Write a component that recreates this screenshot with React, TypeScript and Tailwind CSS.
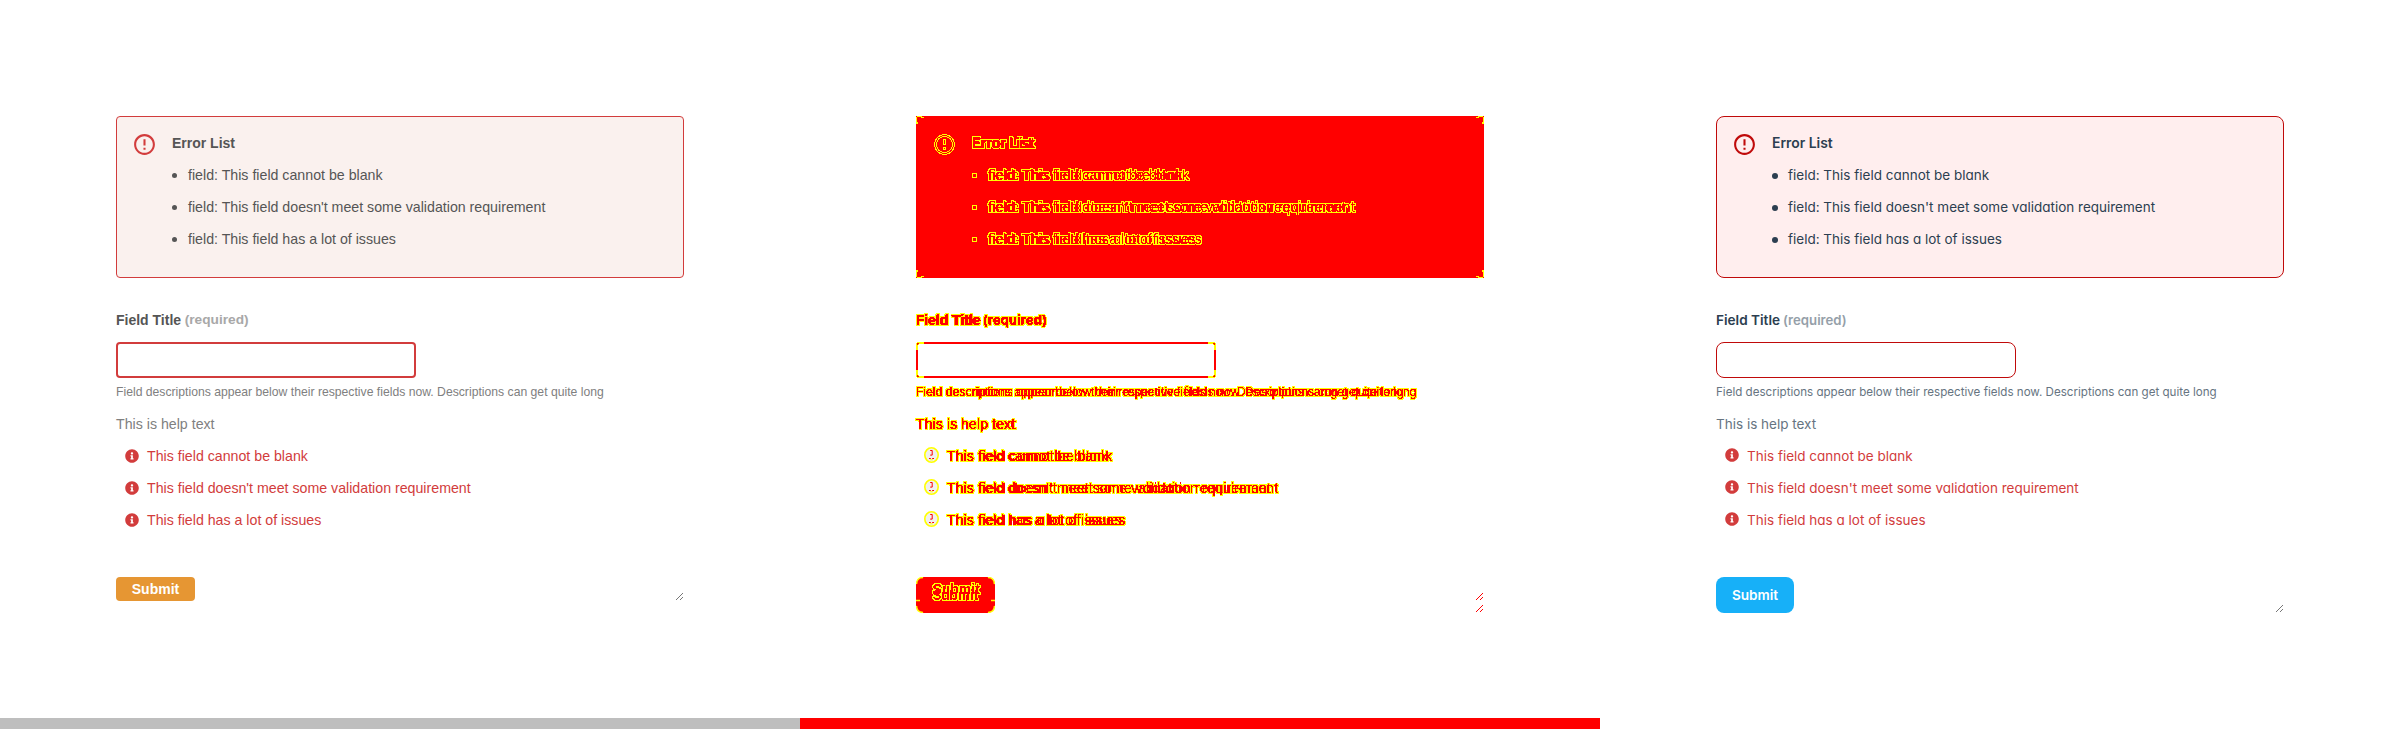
import type { CSSProperties } from "react";
import { clsx } from "clsx";
import { FaInfoCircle } from "react-icons/fa";
import { MdErrorOutline } from "react-icons/md";

type Theme = "before" | "diff" | "after";
type Kind = "title" | "label" | "required" | "body" | "small" | "button";

const classicText: Record<Kind, string> = {
  title: "font-['Liberation_Sans',sans-serif] text-[14px] font-bold",
  label: "font-['Liberation_Sans',sans-serif] text-[14px] font-bold",
  required: "font-['Liberation_Sans',sans-serif] text-[13.7px] font-bold",
  body: "font-['Liberation_Sans',sans-serif] text-[14.2px]",
  small: "font-['Liberation_Sans',sans-serif] text-[12.2px]",
  button: "font-['Liberation_Sans',sans-serif] text-[14px] font-bold",
};

const modernText: Record<Kind, string> = {
  title: "font-[Inter,sans-serif] [font-feature-settings:'cv11'] text-[13.9px] font-semibold",
  label: "font-[Inter,sans-serif] [font-feature-settings:'cv11'] text-[13.6px] font-semibold",
  required: "font-[Inter,sans-serif] [font-feature-settings:'cv11'] text-[13.2px] font-semibold",
  body: "font-[Inter,sans-serif] [font-feature-settings:'cv11'] text-[13.5px]",
  small: "font-[Inter,sans-serif] [font-feature-settings:'cv11'] text-[11.6px]",
  button: "font-[Inter,sans-serif] [font-feature-settings:'cv11'] text-[13.6px] font-semibold",
};

const overlayText: Record<Kind, string> = {
  title: "before:top-0 before:font-['Liberation_Sans',sans-serif] before:text-[14px] before:font-bold",
  label: "before:top-0 before:font-['Liberation_Sans',sans-serif] before:text-[14px] before:font-bold",
  required: "before:top-0 before:font-['Liberation_Sans',sans-serif] before:text-[13.7px] before:font-bold",
  body: "before:top-0 before:font-['Liberation_Sans',sans-serif] before:text-[14.2px]",
  small: "before:top-0 before:font-['Liberation_Sans',sans-serif] before:text-[12.2px]",
  button: "before:-top-[6px] before:font-['Liberation_Sans',sans-serif] before:text-[14px] before:font-bold",
};

function Txt({ theme, kind, children }: { theme: Theme; kind: Kind; children: string }) {
  if (theme === "before") return <span className={clsx("block whitespace-nowrap", classicText[kind])}>{children}</span>;
  if (theme === "after") return <span className={clsx("block whitespace-nowrap", modernText[kind])}>{children}</span>;
  return (
    <span
      data-text={children}
      className={clsx(
        "relative block w-fit whitespace-nowrap text-[#ff0000] [filter:url(#edges)]",
        "before:absolute before:left-0 before:whitespace-nowrap before:content-[attr(data-text)]",
        modernText[kind],
        overlayText[kind],
      )}
    >
      {children}
    </span>
  );
}

/** Splits a shape into a red core and a hard yellow fringe. */
function EdgeFilter() {
  return (
    <svg className="absolute size-0" aria-hidden="true">
      <filter id="edges" x="-5%" y="-40%" width="110%" height="180%" colorInterpolationFilters="sRGB">
        <feComponentTransfer in="SourceAlpha" result="core">
          <feFuncA type="linear" slope="40" intercept="-16" />
        </feComponentTransfer>
        <feComponentTransfer in="SourceAlpha" result="strong">
          <feFuncA type="linear" slope="40" intercept="-22" />
        </feComponentTransfer>
        <feMorphology in="strong" operator="dilate" radius="1" result="wide" />
        <feFlood floodColor="#ffff00" />
        <feComposite in2="wide" operator="in" result="fringe" />
        <feFlood floodColor="#ff0000" />
        <feComposite in2="core" operator="in" result="center" />
        <feMerge>
          <feMergeNode in="fringe" />
          <feMergeNode in="center" />
        </feMerge>
      </filter>
    </svg>
  );
}

/** Yellow marks over the four corners of a box whose radius changed. */
function Corners({ inner }: { inner?: boolean }) {
  const edge = inner ? "0px" : "-1px";
  const spots = ["top-(--edge) left-(--edge)", "top-(--edge) right-(--edge) -scale-x-100", "bottom-(--edge) left-(--edge) -scale-y-100", "right-(--edge) bottom-(--edge) -scale-100"];
  return (
    <>
      {spots.map((spot) => (
        <svg
          key={spot}
          viewBox="0 0 8 8"
          className={clsx("absolute size-2", spot)}
          style={{ "--edge": edge } as CSSProperties}
          shapeRendering="crispEdges"
          fill="#ffff00"
        >
          <path d="M0 0h1v1H0z" fill={inner ? "#ffffff" : "#ff0000"} />
          <path d="M1 0h5v1H1zM5 1h3v1H5zM0 1h1v5H0zM0 6h2v2H0z" />
          {inner && <path d="M1 3h1v3H1zM3 1h2v1H3zM2 2h1v1H2zM6 0h2v1H6z" />}
        </svg>
      ))}
    </>
  );
}

function ResizeHandle({ color }: { color: string }) {
  return (
    <svg viewBox="0 0 7 7" className="size-[7px]" shapeRendering="crispEdges" fill={color}>
      <path d="M6 0h1v1H6zM5 1h1v1H5zM4 2h1v1H4zM3 3h1v1H3zM2 4h1v1H2zM1 5h1v1H1zM0 6h1v1H0zM6 4h1v1H6zM5 5h1v1H5zM4 6h1v1H4z" />
    </svg>
  );
}

function DiffInfo() {
  return (
    <svg viewBox="0 0 15 16" className="h-4 w-[15px]">
      <ellipse cx="7.5" cy="8" rx="6.7" ry="7.2" fill="#f0f0f0" stroke="#ffff00" strokeWidth="1.6" />
      <path d="M6.2 3.5h2v4.6h-2M5 11.5h1.8M8.2 11.5H10" fill="none" stroke="#ff0000" strokeWidth="1" />
      <path d="M6.2 12.8h2.6" stroke="#ffff00" strokeWidth="1" />
    </svg>
  );
}

/** Outlined alert mark drawn as its edges only. */
function DiffAlert() {
  return (
    <svg viewBox="0 0 25 25" className="mt-[5px] size-[25px] shrink-0" fill="none" stroke="#ffff00" strokeWidth="1" shapeRendering="crispEdges">
      <circle cx="12.5" cy="12.5" r="10" />
      <circle cx="12.5" cy="12.5" r="8" />
      <path d="M11.5 7.5h2v5h-2zM11.5 15.5h2v2h-2z" />
    </svg>
  );
}

const issues = [
  "This field cannot be blank",
  "This field doesn't meet some validation requirement",
  "This field has a lot of issues",
];

function Panel({ theme }: { theme: Theme }) {
  const before = theme === "before";
  const diff = theme === "diff";
  const after = theme === "after";
  return (
    <section className="flex h-[729px] w-[800px] flex-col bg-white">
      <div className="mx-[116px] mt-[116px] flex w-[568px] flex-col items-start">
        <div
          className={clsx(
            "relative flex h-[162px] w-full border pt-[10px] pl-[15px]",
            before && "rounded-[4px] border-[#d23c3c] bg-[#faf1ee] text-[#555555]",
            diff && "border-[#ff0000] bg-[#ff0000]",
            after && "rounded-[8px] border-[#c00a0a] bg-[#ffeeee] text-[#2c3e50]",
          )}
        >
          {diff && <Corners />}
          {diff ? (
            <DiffAlert />
          ) : (
            <MdErrorOutline className={clsx("mt-[5px] size-[25px] shrink-0", before ? "text-[#d23c3c]" : "text-[#c00a0a]")} />
          )}
          <div className="ml-[15px]">
            <div className="h-8 leading-8">
              <Txt theme={theme} kind="title">Error List</Txt>
            </div>
            <ul>
              {issues.map((issue) => (
                <li key={issue} className="flex h-8 items-center leading-8">
                  <span
                    className={clsx(
                      "mt-px shrink-0",
                      before && "mr-[11px] size-[5px] rounded-full bg-[#555555]",
                      diff && "mr-[11px] size-[5px] border border-[#ffff00]",
                      after && "mr-[10px] size-[6px] rounded-full bg-[#2c3e50]",
                    )}
                  />
                  <Txt theme={theme} kind="body">{"field: " + issue}</Txt>
                </li>
              ))}
            </ul>
          </div>
        </div>

        <div
          className={clsx(
            "mt-[26px] flex h-8 leading-8",
            before ? "gap-[3.6px] text-[#555555]" : "gap-[3px] text-[#2c3e50]",
          )}
        >
          <Txt theme={theme} kind="label">Field Title</Txt>
          <div className={before ? "text-[#a8a8a8]" : "text-[#959fa9]"}>
            <Txt theme={theme} kind="required">(required)</Txt>
          </div>
        </div>

        <div
          className={clsx(
            "relative mt-[6px] h-9 w-[300px]",
            before && "rounded-[4px] border-2 border-[#d23c3c]",
            after && "rounded-[8px] border border-[#c00a0a]",
          )}
        >
          {diff && (
            <>
              <div className="size-full border-2 border-[#ff0000]" />
              <Corners inner />
            </>
          )}
        </div>

        <div className={clsx("mt-[6px] h-4 leading-4", before ? "text-[#808080]" : "text-[#667481]")}>
          <Txt theme={theme} kind="small">
            Field descriptions appear below their respective fields now. Descriptions can get quite long
          </Txt>
        </div>
        <div className={clsx("mt-2 h-8 leading-8", before ? "text-[#808080]" : "text-[#667481]")}>
          <Txt theme={theme} kind="body">This is help text</Txt>
        </div>

        <ul className="text-[#d23c3c]">
          {issues.map((issue) => (
            <li key={issue} className="flex h-8 leading-8">
              <span className="w-[31px] shrink-0 pl-2">
                {diff ? (
                  <span className="block pt-[7px]"><DiffInfo /></span>
                ) : (
                  <FaInfoCircle className={clsx("ml-[0.5px] size-[14px]", before ? "mt-[8.5px]" : "mt-[7.5px]")} />
                )}
              </span>
              <Txt theme={theme} kind="body">{issue}</Txt>
            </li>
          ))}
        </ul>

        <div className="mt-[41px] flex w-full items-end justify-between">
          <button
            className={clsx(
              "relative flex justify-center text-white",
              before && "h-6 w-[79px] rounded-[4px] bg-[#e69633] leading-6",
              diff && "h-9 w-[79px] rounded-[8px] bg-[#ff0000] leading-9",
              after && "h-9 w-[78px] rounded-[8px] bg-[#17b0f8] leading-9",
            )}
          >
            {diff && (
              <svg viewBox="0 0 79 36" className="absolute inset-0 h-9 w-[79px]" fill="none" stroke="#ffff00" strokeWidth="1.4">
                <path d="M.6 7Q.6.6 7 .6M72 .6Q78.4.6 78.4 7M.6 29Q.6 35.4 7 35.4M72 35.4Q78.4 35.4 78.4 29M0 23.5h4M75 23.5h4" />
              </svg>
            )}
            <Txt theme={theme} kind="button">Submit</Txt>
          </button>
          <div className="flex flex-col gap-[5px] pr-px pb-px">
            <ResizeHandle color={diff ? "#ff0000" : "#777777"} />
            {diff && <ResizeHandle color="#ff0000" />}
          </div>
        </div>
      </div>
      <div className={clsx("mt-auto h-[11px]", before && "bg-[#bebebe]", diff && "bg-[#ff0000]")} />
    </section>
  );
}

export default function App() {
  return (
    <main className="flex w-[2400px] bg-white">
      <EdgeFilter />
      <Panel theme="before" />
      <Panel theme="diff" />
      <Panel theme="after" />
    </main>
  );
}
